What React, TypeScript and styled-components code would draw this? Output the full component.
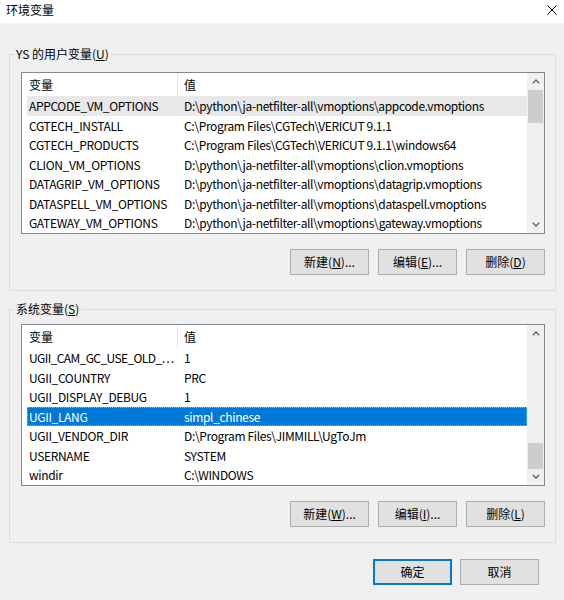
import { createGlobalStyle, styled } from 'styled-components';

const GlobalStyle = createGlobalStyle`
  html, body {
    margin: 0;
    padding: 0;
  }

  body {
    background: #f0f0f0;
    font-family: 'Noto Sans CJK SC', sans-serif;
    font-size: 12px;
    color: #000;
  }
`;

const Window = styled.div`
  width: 564px;
  height: 600px;
  display: flex;
  flex-direction: column;
  background: #f0f0f0;
  overflow: hidden;
`;

const TitleBar = styled.div`
  height: 23px;
  box-sizing: border-box;
  background: #fff;
  display: flex;
  justify-content: space-between;
  align-items: flex-start;
  padding: 2px 7px 0 6px;
`;

const Title = styled.span`
  line-height: 16px;
`;

const CloseIcon = styled.svg`
  margin-top: 3px;
`;

const Body = styled.div`
  display: flex;
  flex-direction: column;
  padding: 0 8px 0 9px;
`;

const Group = styled.fieldset<{ $top: number; $padTop: number }>`
  margin: ${(p) => p.$top}px 0 0;
  padding: ${(p) => p.$padTop}px 10px 15px 4px;
  border: 1px solid #dcdcdc;
  min-width: 0;
`;

const Legend = styled.legend`
  padding: 0 2px;
  line-height: 16px;
  font-size: 12px;
`;

const GroupContent = styled.div`
  display: flex;
  flex-direction: column;
  gap: 15px;
  margin-left: 7px;
`;

const ListBox = styled.div`
  height: 162px;
  box-sizing: border-box;
  border: 1px solid #828790;
  background: #fff;
  display: flex;
  overflow: hidden;
`;

const ListContent = styled.div`
  flex: 1;
  min-width: 0;
  display: flex;
  flex-direction: column;
`;

const HeaderRow = styled.div`
  height: 23px;
  flex-shrink: 0;
  margin-left: 5px;
  display: grid;
  grid-template-columns: 151px 1fr;
  align-items: stretch;
`;

const HeaderCell = styled.div<{ $first?: boolean }>`
  display: flex;
  align-items: center;
  padding-left: ${(p) => (p.$first ? '2px' : '6px')};
  border-right: ${(p) => (p.$first ? '1px solid #e5e5e5' : 'none')};
`;

const Row = styled.div<{ $state?: 'hover' | 'selected' }>`
  height: 19.5px;
  flex-shrink: 0;
  margin-left: 5px;
  display: grid;
  grid-template-columns: 151px 1fr;
  align-items: center;
  box-sizing: border-box;
  background: ${(p) =>
    p.$state === 'selected' ? '#0078d7' : p.$state === 'hover' ? '#e8e8e8' : 'transparent'};
  color: ${(p) => (p.$state === 'selected' ? '#fff' : '#000')};
  outline: ${(p) => (p.$state === 'selected' ? '1px dotted #d9a066' : 'none')};
  outline-offset: -1px;
`;

const Cell = styled.div<{ $first?: boolean; $tight?: boolean }>`
  padding-left: ${(p) => (p.$first ? '2px' : '6px')};
  padding-right: ${(p) => (p.$first ? '0' : '4px')};
  letter-spacing: ${(p) => (p.$tight ? '-0.6px' : '-0.35px')};
  white-space: nowrap;
  overflow: hidden;
  text-overflow: ellipsis;
`;

const ScrollBar = styled.div`
  width: 17px;
  flex-shrink: 0;
  background: #f0f0f0;
  display: flex;
  flex-direction: column;
`;

const ArrowButton = styled.div`
  height: 17px;
  flex-shrink: 0;
  display: flex;
  align-items: center;
  justify-content: center;
`;

const Track = styled.div`
  flex: 1;
  position: relative;
`;

const Thumb = styled.div<{ $top: number; $size: number }>`
  position: absolute;
  left: 1px;
  right: 1px;
  top: ${(p) => p.$top}px;
  height: ${(p) => p.$size}px;
  background: #cdcdcd;
`;

const ButtonRow = styled.div`
  display: flex;
  justify-content: flex-end;
  gap: 9px;
`;

const Button = styled.button<{ $default?: boolean }>`
  width: 79px;
  height: 26px;
  box-sizing: border-box;
  padding: 0;
  background: #e1e1e1;
  border: 1px solid ${(p) => (p.$default ? '#0078d7' : '#adadad')};
  box-shadow: ${(p) => (p.$default ? 'inset 0 0 0 1px #0078d7' : 'none')};
  font-family: inherit;
  font-size: 12px;
  color: #000;
  line-height: 16px;
`;

const Footer = styled.div`
  display: flex;
  justify-content: flex-end;
  gap: 8px;
  margin-top: 16px;
  padding-right: 17px;
`;

type Item = { name: string; value: string; state?: 'hover' | 'selected'; cut?: boolean };

const USER_VARS: Item[] = [
  { name: 'APPCODE_VM_OPTIONS', value: 'D:\\python\\ja-netfilter-all\\vmoptions\\appcode.vmoptions', state: 'hover' },
  { name: 'CGTECH_INSTALL', value: 'C:\\Program Files\\CGTech\\VERICUT 9.1.1' },
  { name: 'CGTECH_PRODUCTS', value: 'C:\\Program Files\\CGTech\\VERICUT 9.1.1\\windows64' },
  { name: 'CLION_VM_OPTIONS', value: 'D:\\python\\ja-netfilter-all\\vmoptions\\clion.vmoptions' },
  { name: 'DATAGRIP_VM_OPTIONS', value: 'D:\\python\\ja-netfilter-all\\vmoptions\\datagrip.vmoptions' },
  { name: 'DATASPELL_VM_OPTIONS', value: 'D:\\python\\ja-netfilter-all\\vmoptions\\dataspell.vmoptions' },
  { name: 'GATEWAY_VM_OPTIONS', value: 'D:\\python\\ja-netfilter-all\\vmoptions\\gateway.vmoptions' },
];

const SYSTEM_VARS: Item[] = [
  { name: 'UGII_CAM_GC_USE_OLD_…', value: '1', cut: true },
  { name: 'UGII_COUNTRY', value: 'PRC' },
  { name: 'UGII_DISPLAY_DEBUG', value: '1' },
  { name: 'UGII_LANG', value: 'simpl_chinese', state: 'selected' },
  { name: 'UGII_VENDOR_DIR', value: 'D:\\Program Files\\JIMMILL\\UgToJm' },
  { name: 'USERNAME', value: 'SYSTEM' },
  { name: 'windir', value: 'C:\\WINDOWS' },
];

function Chevron({ down }: { down?: boolean }) {
  return (
    <svg width="8" height="5" viewBox="0 0 8 5">
      <polyline
        points={down ? '0.8,0.8 4,4 7.2,0.8' : '0.8,4.2 4,1 7.2,4.2'}
        fill="none"
        stroke="#606060"
        strokeWidth="1.3"
      />
    </svg>
  );
}

function VarList({ items, thumbTop, thumbSize }: { items: Item[]; thumbTop: number; thumbSize: number }) {
  return (
    <ListBox>
      <ListContent>
        <HeaderRow>
          <HeaderCell $first>变量</HeaderCell>
          <HeaderCell>值</HeaderCell>
        </HeaderRow>
        {items.map((item) => (
          <Row key={item.name} $state={item.state}>
            <Cell $first $tight={item.cut}>
              {item.name}
            </Cell>
            <Cell>{item.value}</Cell>
          </Row>
        ))}
      </ListContent>
      <ScrollBar>
        <ArrowButton>
          <Chevron />
        </ArrowButton>
        <Track>
          <Thumb $top={thumbTop} $size={thumbSize} />
        </Track>
        <ArrowButton>
          <Chevron down />
        </ArrowButton>
      </ScrollBar>
    </ListBox>
  );
}

export default function App() {
  return (
    <Window>
      <GlobalStyle />
      <TitleBar>
        <Title>环境变量</Title>
        <CloseIcon width="10" height="10" viewBox="0 0 10 10">
          <path d="M0.5 0.5 L9.5 9.5 M9.5 0.5 L0.5 9.5" stroke="#000" strokeWidth="1" />
        </CloseIcon>
      </TitleBar>
      <Body>
        <Group $top={23} $padTop={10}>
          <Legend>
            YS 的用户变量(<u>U</u>)
          </Legend>
          <GroupContent>
            <VarList items={USER_VARS} thumbTop={0} thumbSize={33} />
            <ButtonRow>
              <Button>
                新建(<u>N</u>)...
              </Button>
              <Button>
                编辑(<u>E</u>)...
              </Button>
              <Button>
                删除(<u>D</u>)
              </Button>
            </ButtonRow>
          </GroupContent>
        </Group>
        <Group $top={10} $padTop={7}>
          <Legend>
            系统变量(<u>S</u>)
          </Legend>
          <GroupContent>
            <VarList items={SYSTEM_VARS} thumbTop={101} thumbSize={26} />
            <ButtonRow>
              <Button>
                新建(<u>W</u>)...
              </Button>
              <Button>
                编辑(<u>I</u>)...
              </Button>
              <Button>
                删除(<u>L</u>)
              </Button>
            </ButtonRow>
          </GroupContent>
        </Group>
        <Footer>
          <Button $default>确定</Button>
          <Button>取消</Button>
        </Footer>
      </Body>
    </Window>
  );
}
